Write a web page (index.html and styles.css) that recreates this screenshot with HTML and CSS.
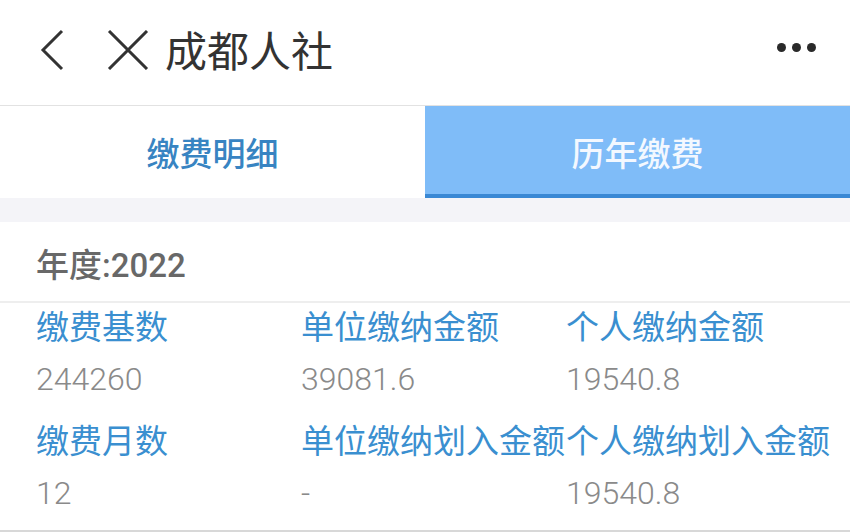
FILE: index.html
```html
<!DOCTYPE html>
<html lang="zh-CN">
<head>
<meta charset="UTF-8" />
<meta name="viewport" content="width=device-width, initial-scale=1" />
<title>成都人社</title>
<link rel="stylesheet" href="styles.css">
</head>
<body>
<div class="topbar">
  <svg class="back" width="26" height="42" viewBox="0 0 26 42"><path d="M23 2 L4 21 L23 40" fill="none" stroke="#333" stroke-width="3"/></svg>
  <svg class="close" width="42" height="40" viewBox="0 0 42 40"><path d="M2 1 L40 39 M40 1 L2 39" fill="none" stroke="#333" stroke-width="3"/></svg>
  <div class="title">成都人社</div>
  <div class="more"><span></span><span></span><span></span></div>
</div>

<div class="tabs">
  <div class="tab">缴费明细</div>
  <div class="tab active">历年缴费</div>
</div>

<div class="gap"></div>

<div class="year">年度:2022</div>

<div class="grid">
  <div class="cell"><div class="label">缴费基数</div><div class="value">244260</div></div>
  <div class="cell"><div class="label">单位缴纳金额</div><div class="value">39081.6</div></div>
  <div class="cell"><div class="label">个人缴纳金额</div><div class="value">19540.8</div></div>
  <div class="cell"><div class="label">缴费月数</div><div class="value">12</div></div>
  <div class="cell"><div class="label">单位缴纳划入金额</div><div class="value">-</div></div>
  <div class="cell"><div class="label">个人缴纳划入金额</div><div class="value">19540.8</div></div>
</div>
</body>
</html>
```

FILE: styles.css
```css
body {
  margin: 0;
  background: #ffffff;
  font-family: Roboto, "Noto Sans CJK SC", sans-serif;
  overflow: hidden;
}
.topbar {
  height: 105px;
  display: flex;
  align-items: center;
  padding-left: 39px;
  border-bottom: 1px solid #e2e2e2;
}
.back {
  margin-top: -6px;
}
.close {
  margin-left: 42px;
  margin-top: -6px;
}
.title {
  margin-left: 16px;
  font-size: 42px;
  color: #333;
  margin-top: -8px;
}
.more {
  margin-left: auto;
  margin-right: 34px;
  display: flex;
  gap: 6px;
  margin-top: -10px;
}
.more span {
  width: 9px;
  height: 9px;
  border-radius: 50%;
  background: #2a2a2a;
}
.tabs {
  display: flex;
  height: 92px;
}
.tab {
  flex: 1;
  display: flex;
  align-items: center;
  justify-content: center;
  font-size: 33px;
  font-weight: 500;
  color: #3884c2;
  background: #fff;
}
.tab.active {
  background: #7fbcf8;
  color: #f3f8ff;
  border-bottom: 4px solid #3a88d4;
  padding-top: 4px;
}
.gap {
  height: 24px;
  background: #f4f4f8;
}
.year {
  height: 79px;
  line-height: 88px;
  padding-left: 36px;
  font-size: 33px;
  font-weight: 500;
  color: #686868;
  border-bottom: 2px solid #eeeeee;
}
.grid {
  display: grid;
  grid-template-columns: 265px 265px 265px;
  row-gap: 12px;
  padding: 0 0 11px 36px;
  border-bottom: 2px solid #d8d8d8;
}
.label {
  height: 50px;
  line-height: 50px;
  font-size: 33px;
  color: #3a8fd0;
  white-space: nowrap;
}
.value {
  height: 52px;
  line-height: 52px;
  font-size: 32px;
  font-weight: 300;
  color: #8a8a8a;
}
```
